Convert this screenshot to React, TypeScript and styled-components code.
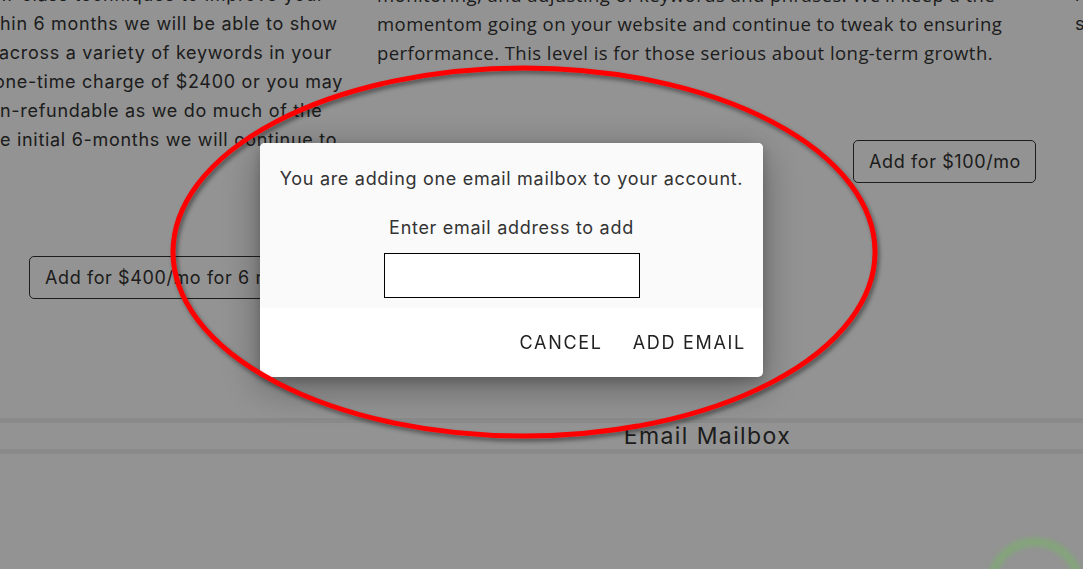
import React from 'react';
import styled, { createGlobalStyle } from 'styled-components';

const GlobalStyle = createGlobalStyle`
  html, body {
    margin: 0;
    padding: 0;
    background: #ffffff;
    overflow: hidden;
    font-family: Inter, "DejaVu Sans", sans-serif;
    color: #333333;
  }
  #root {
    width: 1083px;
    height: 569px;
    position: relative;
    overflow: hidden;
  }
`;

const Page = styled.div`
  width: 1083px;
  height: 569px;
`;

const Columns = styled.div`
  display: flex;
  margin-top: -20px;
`;

const Column = styled.div<{ width: number; alt?: boolean }>`
  width: ${p => p.width}px;
  flex-shrink: 0;
  display: flex;
  flex-direction: column;
  font-family: ${p => (p.alt ? '"Open Sans", sans-serif' : 'Inter, sans-serif')};
  font-size: ${p => (p.alt ? '18.5px' : '18px')};
  letter-spacing: ${p => (p.alt ? '0.45px' : '0.7px')};
  line-height: 29px;
  color: #333;
`;

// lines of the left column are cut by the window edge, shift says how far
const Line = styled.div<{ shift?: number }>`
  white-space: nowrap;
  margin-left: ${p => p.shift ?? 0}px;
`;

const PlanButton = styled.button<{ offset: number; alignEnd?: boolean }>`
  align-self: ${p => (p.alignEnd ? 'flex-end' : 'flex-start')};
  margin-top: ${p => p.offset}px;
  margin-left: ${p => (p.alignEnd ? 0 : 29)}px;
  margin-right: ${p => (p.alignEnd ? 39 : 0)}px;
  height: 43px;
  padding: 0 14px 0 15px;
  background: transparent;
  border: 1px solid #333;
  border-radius: 5px;
  font-family: Inter, sans-serif;
  font-size: 18px;
  letter-spacing: 0.6px;
  color: #333;
  white-space: nowrap;
`;

const SectionBand = styled.div`
  margin-top: 119px;
  border-top: 5px solid #f0f0f0;
  border-bottom: 5px solid #f0f0f0;
  height: 26px;
  padding-left: 332px;
  display: flex;
  align-items: center;
  justify-content: center;
  font-size: 23px;
  letter-spacing: 1.4px;
  color: #333;
`;

const Overlay = styled.div`
  position: fixed;
  inset: 0;
  background: rgba(0, 0, 0, 0.424);
  display: flex;
  align-items: center;
  justify-content: center;
  padding: 0 60px 49px 0;
`;

const Dialog = styled.div`
  width: 503px;
  border-radius: 5px;
  overflow: hidden;
  background: #fff;
  box-shadow: 0 10px 40px rgba(0, 0, 0, 0.35), 0 4px 12px rgba(0, 0, 0, 0.2);
`;

const DialogBody = styled.div`
  background: #fafafa;
  padding: 24px 10px 10px;
  display: flex;
  flex-direction: column;
  align-items: center;
  font-size: 18px;
  letter-spacing: 0.7px;
  line-height: 24px;
  color: #333;
  white-space: nowrap;
`;

const Label = styled.div`
  margin-top: 25px;
`;

const EmailInput = styled.input`
  margin-top: 13px;
  width: 256px;
  height: 45px;
  box-sizing: border-box;
  border: 1px solid #000;
  background: #fff;
  outline: none;
`;

const Actions = styled.div`
  height: 69px;
  display: flex;
  justify-content: flex-end;
  align-items: center;
  gap: 14px;
  padding-right: 9px;
`;

const ActionButton = styled.button`
  background: none;
  border: none;
  padding: 8px;
  font-family: Inter, sans-serif;
  font-size: 18px;
  letter-spacing: 1.7px;
  text-transform: uppercase;
  color: #222;
`;

const Widget = styled.svg`
  position: fixed;
  right: 0;
  bottom: 0;
  width: 120px;
  height: 80px;
`;

const Annotation = styled.svg`
  position: fixed;
  inset: 0;
  width: 1083px;
  height: 569px;
  pointer-events: none;
`;

const App: React.FC = () => {
  return (
    <>
      <GlobalStyle />
      <Page>
        <Columns>
          <Column width={377}>
            <Line shift={-4}>m-class techniques to improve your</Line>
            <Line>hin 6 months we will be able to show</Line>
            <Line shift={-1}>across a variety of keywords in your</Line>
            <Line shift={-6}>one-time charge of $2400 or you may</Line>
            <Line>n-refundable as we do much of the</Line>
            <Line>e initial 6-months we will continue to</Line>
            <PlanButton offset={102}>Add for $400/mo for 6 months</PlanButton>
          </Column>
          <Column width={698} alt>
            <Line>monitoring, and adjusting of keywords and phrases. We'll keep a the</Line>
            <Line>momentom going on your website and continue to tweak to ensuring</Line>
            <Line>performance. This level is for those serious about long-term growth.</Line>
            <PlanButton offset={73} alignEnd>Add for $100/mo</PlanButton>
          </Column>
          <Column width={40}>
            <Line>l</Line>
            <Line>s</Line>
          </Column>
        </Columns>
        <SectionBand>Email Mailbox</SectionBand>
      </Page>

      <Overlay>
        <Dialog>
          <DialogBody>
            <div>You are adding one email mailbox to your account.</div>
            <Label>Enter email address to add</Label>
            <EmailInput type="email" />
          </DialogBody>
          <Actions>
            <ActionButton>Cancel</ActionButton>
            <ActionButton>Add Email</ActionButton>
          </Actions>
        </Dialog>
      </Overlay>

      <Widget viewBox="0 0 120 80">
        <defs>
          <filter id="soft" x="-20%" y="-20%" width="140%" height="140%">
            <feGaussianBlur stdDeviation="2" />
          </filter>
        </defs>
        <circle cx="72" cy="97" r="44" fill="none" stroke="rgba(110, 190, 90, 0.4)" strokeWidth="9" filter="url(#soft)" />
      </Widget>

      <Annotation viewBox="0 0 1083 569">
        <defs>
          <filter id="shade" x="-10%" y="-10%" width="120%" height="120%">
            <feDropShadow dx="2" dy="3" stdDeviation="2" floodColor="#000" floodOpacity="0.45" />
          </filter>
        </defs>
        <ellipse cx="524" cy="252" rx="351" ry="184" fill="none" stroke="#ff0000" strokeWidth="5" filter="url(#shade)" />
      </Annotation>
    </>
  );
};

export default App;
